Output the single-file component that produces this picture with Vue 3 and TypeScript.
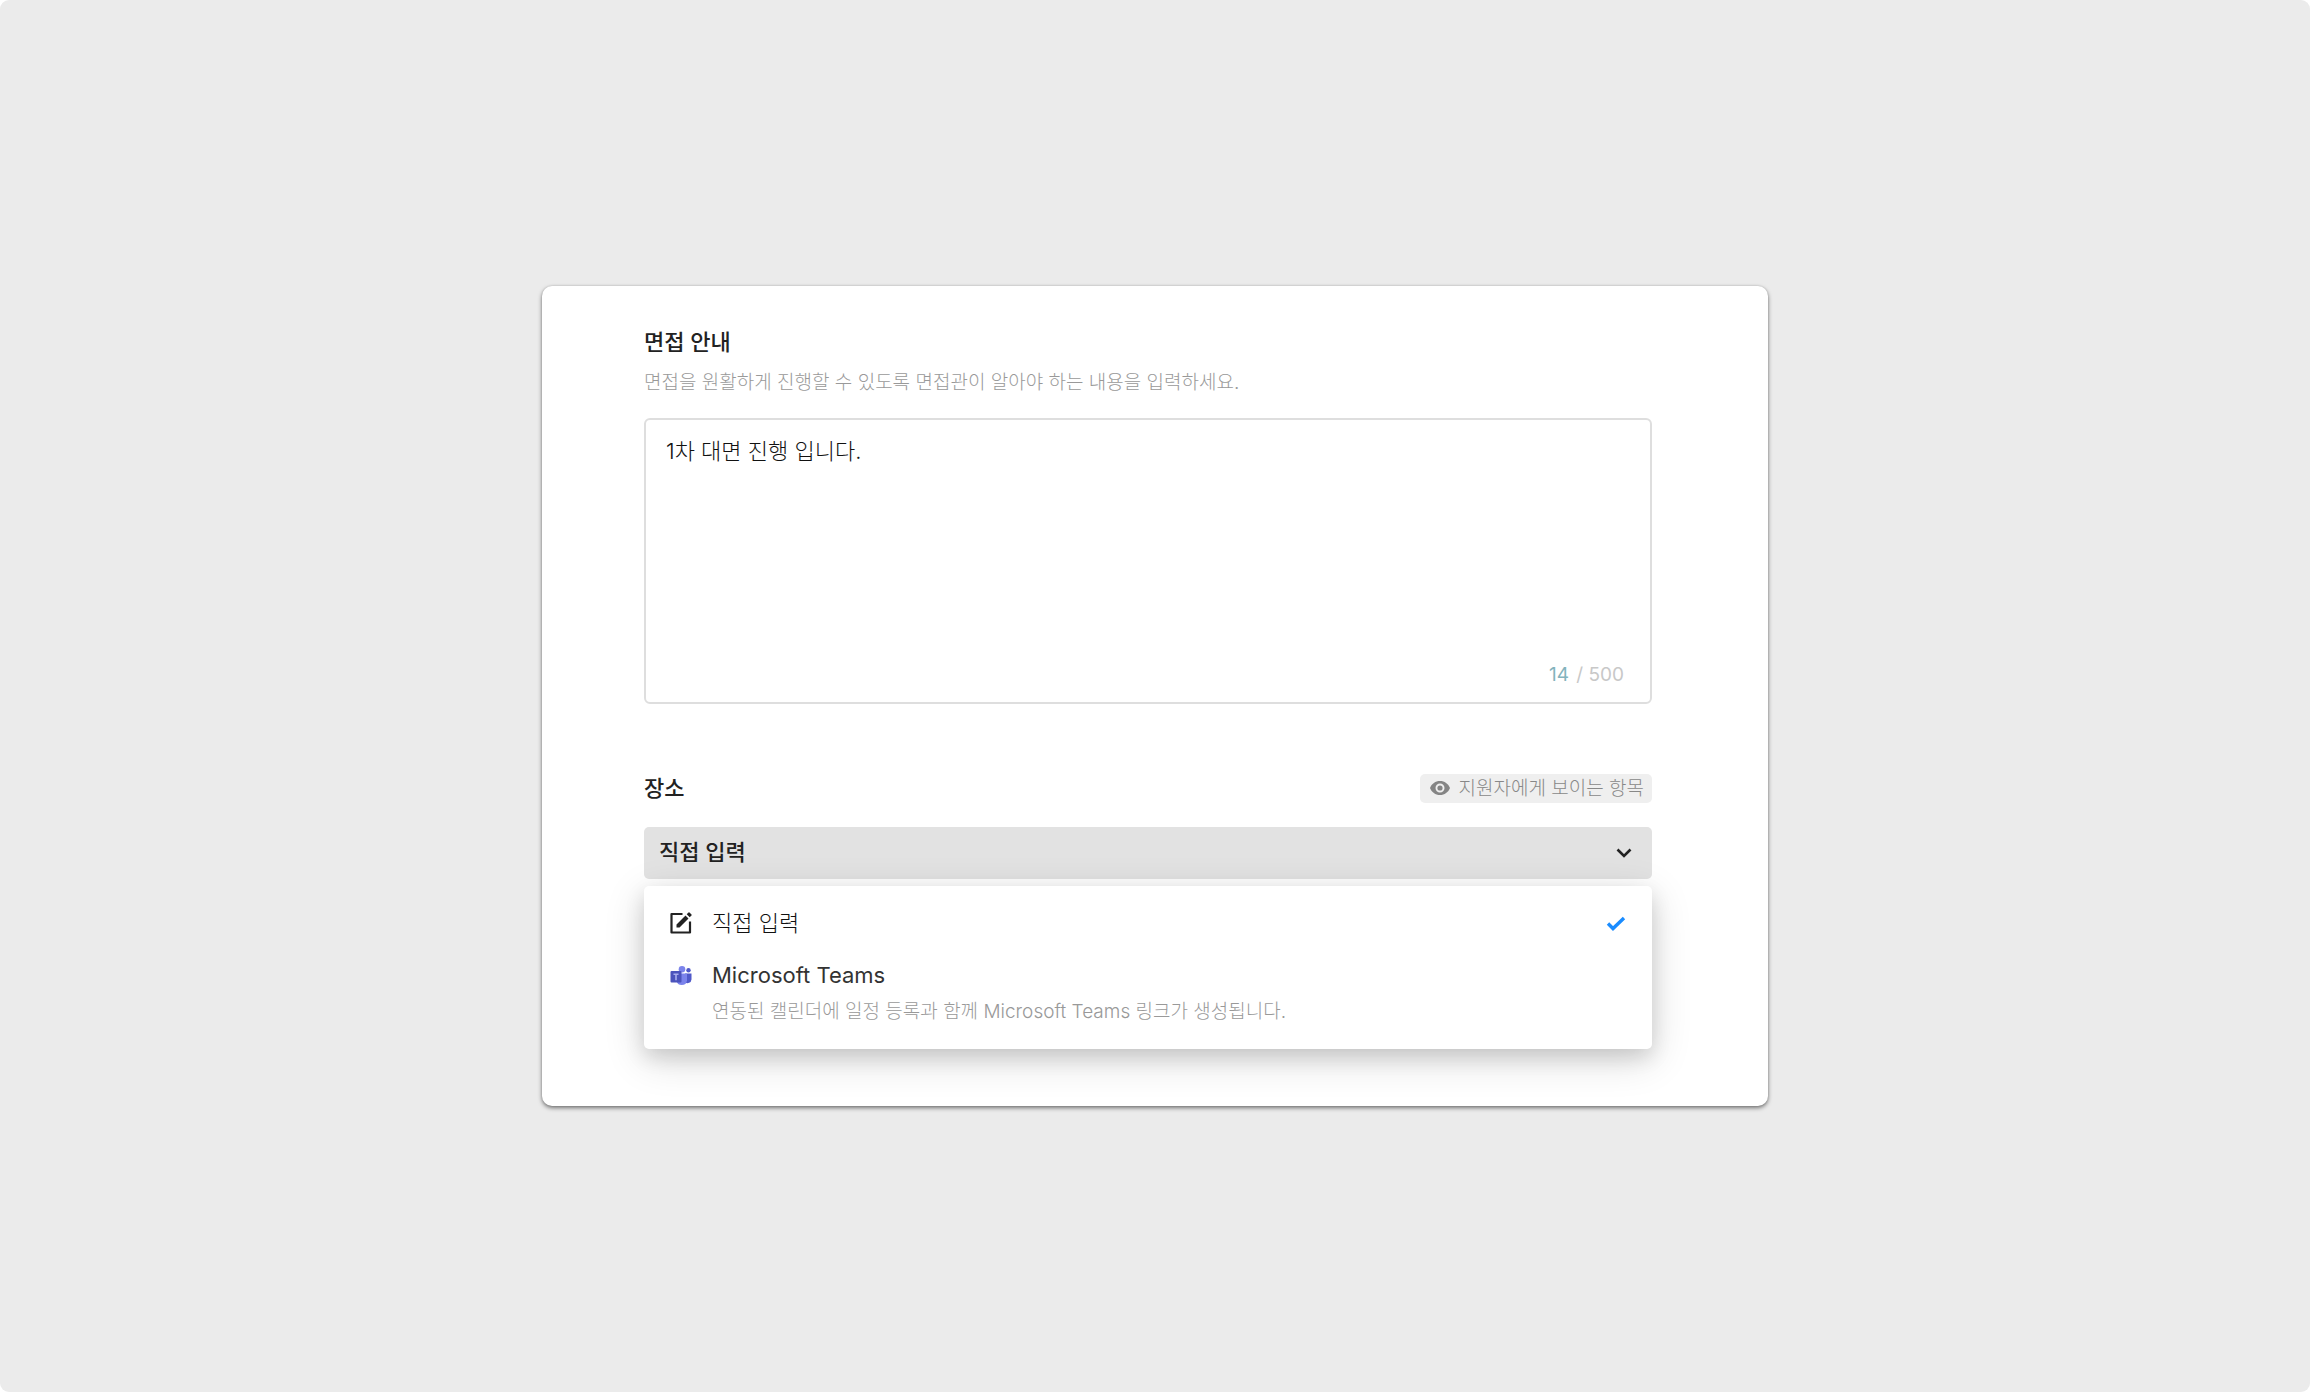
<script setup lang="ts">
import { computed, ref } from 'vue'

const guide = ref('1차 대면 진행 입니다.')
const limit = 500
const byteCount = ref(14)
const place = ref('direct')

const options = [
  { id: 'direct', label: '직접 입력', note: '' },
  { id: 'teams', label: 'Microsoft Teams', note: '연동된 캘린더에 일정 등록과 함께 Microsoft Teams 링크가 생성됩니다.' },
]
const counter = computed(() => `/ ${limit}`)
</script>

<template>
  <main class="page">
    <form class="card" @submit.prevent>
      <section class="guide">
        <label class="title" for="guide">면접 안내</label>
        <p class="hint">면접을 원활하게 진행할 수 있도록 면접관이 알아야 하는 내용을 입력하세요.</p>
        <div class="box">
          <textarea id="guide" v-model="guide" class="area" spellcheck="false"></textarea>
          <p class="count"><span class="used">{{ byteCount }}</span> {{ counter }}</p>
        </div>
      </section>

      <section class="place">
        <div class="head">
          <label class="title" for="place">장소</label>
          <span class="badge">
            <svg class="eye" viewBox="0 0 20 16" aria-hidden="true">
              <path fill-rule="evenodd" d="M10 1C5.4 1 1.700 3.700 0 8c1.700 4.300 5.400 7 10 7s8.300-2.700 10-7c-1.700-4.300-5.400-7-10-7Zm0 2.500a4.500 4.500 0 1 1 0 9 4.500 4.500 0 0 1 0-9Z" />
              <circle cx="10" cy="8" r="2.600" />
            </svg>
            지원자에게 보이는 항목
          </span>
        </div>
        <div class="picker">
          <select id="place" v-model="place" class="select">
            <option v-for="o in options" :key="o.id" :value="o.id">{{ o.label }}</option>
          </select>
          <svg class="chevron" viewBox="0 0 16 10" aria-hidden="true">
            <path d="M1.500 1.500 8 8l6.500-6.500" fill="none" stroke="#222" stroke-width="2.600" />
          </svg>
        </div>
        <ul class="menu">
          <li v-for="o in options" :key="o.id">
            <button type="button" class="option" @click="place = o.id">
              <svg v-if="o.id === 'direct'" class="icon" viewBox="0 0 22 22" aria-hidden="true">
                <path d="M12.500 2H1.500v18.500h18.500V9.500" fill="none" stroke="#222" stroke-width="2.200" stroke-linejoin="round" />
                <path d="M6.500 12.500 15.500 3.500l3 3-9 9h-3ZM16.700 2.300l1.800-1.800q.5-.4 1 0l2 2q.4.500 0 1l-1.800 1.800Z" fill="#222" />
              </svg>
              <svg v-else class="icon" viewBox="0 0 22 22" aria-hidden="true">
                <circle cx="18.500" cy="6.200" r="2.200" fill="#5059c9" />
                <circle cx="12" cy="5.300" r="3.300" fill="#7b83eb" />
                <path d="M15 9.500h6.500v6a4 4 0 0 1-6.500 2.800Z" fill="#5059c9" />
                <path d="M6.500 9.500H17v7a5.300 5.300 0 0 1-10.500 0Z" fill="#7b83eb" />
                <rect x="0.500" y="7" width="11" height="11.500" rx="1" fill="#4b53bc" />
                <path d="M3.500 10.200h5M6 10.200v6" stroke="#a9aeee" stroke-width="1.600" />
              </svg>
              <span class="text">
                <span class="label" :class="{ latin: o.note }">{{ o.label }}</span>
                <span v-if="o.note" class="note">{{ o.note }}</span>
              </span>
              <svg v-if="o.id === place" class="check" viewBox="0 0 20 16" aria-hidden="true">
                <path d="m2 7.500 5 5L18 2" fill="none" stroke="#1a8cff" stroke-width="3.400" />
              </svg>
            </button>
          </li>
        </ul>
      </section>
    </form>
  </main>
</template>

<style>
body {
  margin: 0;
  background: #fff;
}
</style>

<style scoped>
.page {
  display: grid;
  place-items: center;
  min-height: 100vh;
  box-sizing: border-box;
  padding: 32px;
  border-radius: 9px;
  background: #ebebeb;
  color: #222;
  font: 22px/32px Inter, "Noto Sans CJK KR", sans-serif;
}
.page *,
.page *::before {
  box-sizing: border-box;
}
p,
ul {
  margin: 0;
  padding: 0;
}
textarea,
select,
button {
  margin: 0;
  color: inherit;
  font: inherit;
}
.card {
  width: 100%;
  max-width: 1226px;
  padding: 40px 116px 57px 102px;
  border-radius: 10px;
  background: #fff;
  box-shadow: 0 2px 4px rgba(0, 0, 0, 0.5), 0 0 2px rgba(0, 0, 0, 0.15);
}
.title {
  display: block;
  font-weight: 500;
}
.hint {
  margin: 9px 0 19px;
  color: #999;
  font-size: 19px;
  font-weight: 300;
}
.box {
  display: flex;
  flex-direction: column;
  height: 286px;
  padding: 15px 26px 11px 20px;
  border: 2px solid #dedede;
  border-radius: 6px;
}
.area {
  flex: 1;
  padding: 0;
  border: 0;
  outline: 0;
  resize: none;
  background: none;
  color: #111;
  font-weight: 300;
}
.count {
  color: #c8c8c8;
  font-size: 19px;
  text-align: right;
}
.used {
  margin-right: 2px;
  color: #83b3bd;
}
.place {
  margin-top: 68px;
}
.head {
  display: flex;
  align-items: center;
  justify-content: space-between;
  margin-bottom: 23px;
}
.badge {
  display: flex;
  align-items: center;
  gap: 9px;
  padding: 0 8px 0 10px;
  border-radius: 5px;
  background: #efefef;
  color: #888;
  font-size: 19px;
  font-weight: 300;
  line-height: 29px;
}
.eye {
  width: 20px;
  height: 16px;
  fill: #858585;
}
.picker {
  display: grid;
  align-items: center;
}
.select,
.chevron {
  grid-area: 1 / 1;
}
.select {
  width: 100%;
  height: 52px;
  padding: 0 15px 2px;
  border: 0;
  border-radius: 5px;
  appearance: none;
  background: #e2e2e2;
  font-weight: 500;
}
.chevron {
  justify-self: end;
  width: 16px;
  height: 10px;
  margin-right: 20px;
  pointer-events: none;
}
.menu {
  position: relative;
  margin-top: 7px;
  padding: 11px 0;
  border-radius: 5px;
  background: #fff;
  box-shadow: 0 10px 40px rgba(0, 0, 0, 0.16), 0 8px 20px rgba(0, 0, 0, 0.12);
  list-style: none;
}
.option {
  display: flex;
  align-items: flex-start;
  width: 100%;
  padding: 10px 26px;
  border: 0;
  background: none;
  color: #111;
  font-weight: 300;
  text-align: left;
}
.icon {
  width: 22px;
  height: 22px;
  margin: 5px 20px 0 0;
}
.text {
  flex: 1;
}
.label,
.note {
  display: block;
}
.latin {
  color: #333;
  font-weight: 400;
}
.note {
  margin-top: 5px;
  color: #999;
  font-size: 19px;
}
.check {
  width: 20px;
  height: 16px;
  margin-top: 9px;
}
</style>
